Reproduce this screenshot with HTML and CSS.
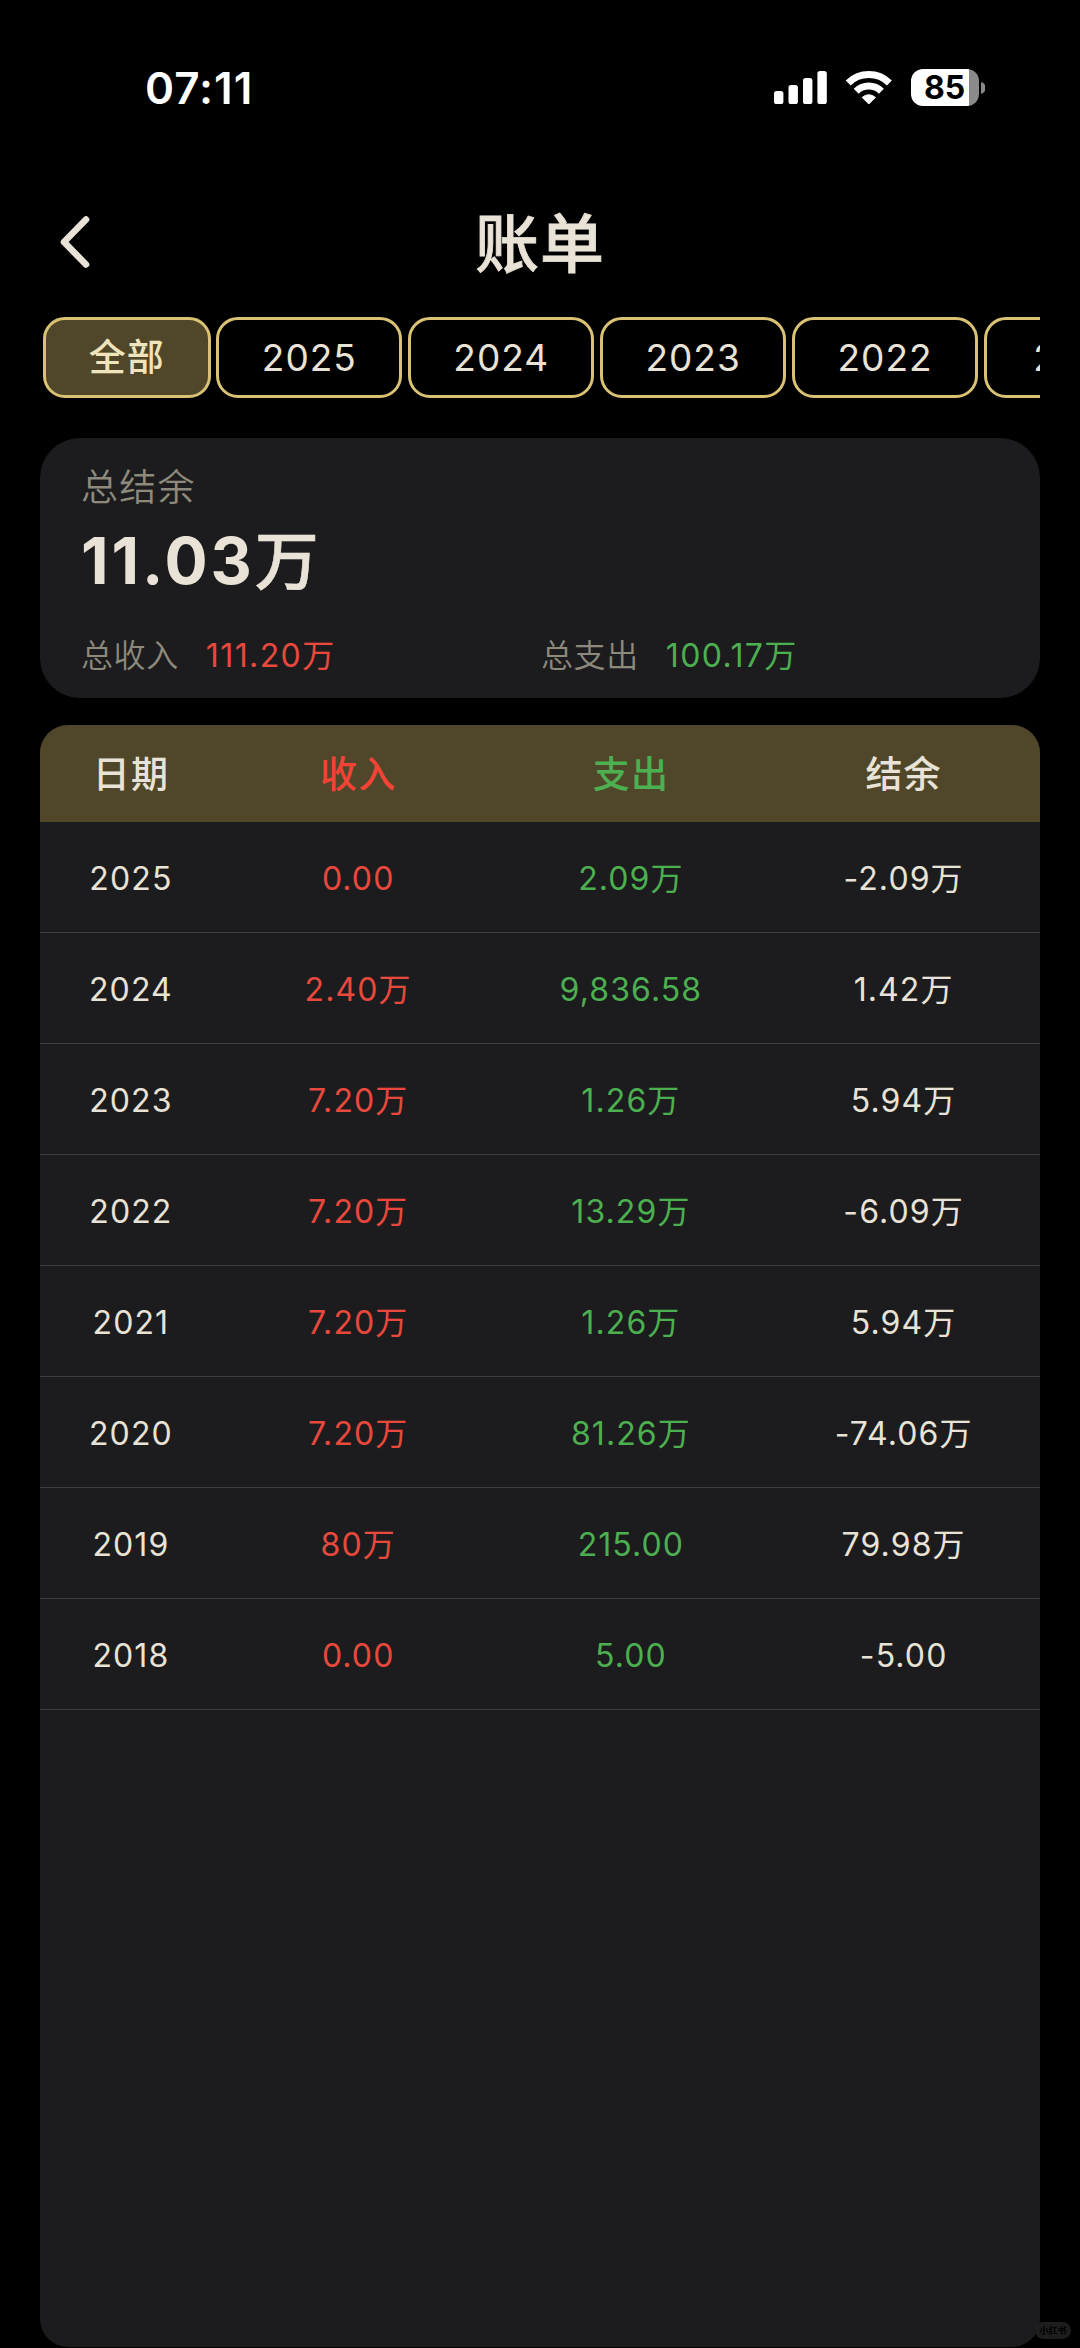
FILE: index.html
```html
<!DOCTYPE html>
<html lang="zh-CN">
<head>
<meta charset="utf-8">
<title>账单</title>
<link rel="stylesheet" href="styles.css">
</head>
<body>
<div class="screen">
  <header class="status">
    <span class="time">07:11</span>
    <div class="indicators">
      <svg class="signal" viewBox="0 0 53 33"><rect x="0" y="20" width="9.4" height="13" rx="2.6"/><rect x="14.5" y="14" width="9.4" height="19" rx="2.6"/><rect x="29" y="7" width="9.4" height="26" rx="2.6"/><rect x="43.4" y="0" width="9.4" height="33" rx="2.6"/></svg>
      <svg class="wifi" viewBox="0 0 46 34"><path class="arc" d="M2.200 12a29.400 29.400 0 0 1 41.200 0M10.200 20.200a18 18 0 0 1 25.200 0"/><path class="dot" d="M16.200 26.400a9.600 9.600 0 0 1 13.200 0L22.800 33z"/></svg>
      <div class="battery"><span class="level">85</span></div>
      <svg class="nub" viewBox="0 0 4 12"><path d="M0 0a6.200 6.200 0 0 1 0 12z"/></svg>
    </div>
  </header>
  <nav class="titlebar">
    <svg class="back" viewBox="0 0 30 52"><path d="M26 3.500 4 26l22 22.500"/></svg>
    <h1>账单</h1>
  </nav>
  <div class="chips">
    <span class="chip active">全部</span><span class="chip">2025</span><span class="chip">2024</span><span class="chip">2023</span><span class="chip">2022</span><span class="chip">2021</span>
  </div>
  <section class="summary">
    <div class="label">总结余</div>
    <div class="total">11.03<span class="unit">万</span></div>
    <div class="pair">
      <div class="item"><span class="name">总收入</span><span class="income">111.20万</span></div>
      <div class="item"><span class="name">总支出</span><span class="expense">100.17万</span></div>
    </div>
  </section>
  <section class="table">
    <div class="row head"><span>日期</span><span class="income">收入</span><span class="expense">支出</span><span>结余</span></div>
    <div class="row"><span>2025</span><span class="income">0.00</span><span class="expense">2.09万</span><span>-2.09万</span></div>
    <div class="row"><span>2024</span><span class="income">2.40万</span><span class="expense">9,836.58</span><span>1.42万</span></div>
    <div class="row"><span>2023</span><span class="income">7.20万</span><span class="expense">1.26万</span><span>5.94万</span></div>
    <div class="row"><span>2022</span><span class="income">7.20万</span><span class="expense">13.29万</span><span>-6.09万</span></div>
    <div class="row"><span>2021</span><span class="income">7.20万</span><span class="expense">1.26万</span><span>5.94万</span></div>
    <div class="row"><span>2020</span><span class="income">7.20万</span><span class="expense">81.26万</span><span>-74.06万</span></div>
    <div class="row"><span>2019</span><span class="income">80万</span><span class="expense">215.00</span><span>79.98万</span></div>
    <div class="row"><span>2018</span><span class="income">0.00</span><span class="expense">5.00</span><span>-5.00</span></div>
  </section>
  <div class="watermark">小红书</div>
</div>
</body>
</html>
```
FILE: styles.css
```css
* { box-sizing: border-box; }
body {
  margin: 0;
  background: #000;
  color: #e8e3d6;
  font-family: Inter, "Noto Sans CJK SC", sans-serif;
}
.screen {
  position: relative;
  display: flex;
  flex-direction: column;
  width: 1080px;
  height: 2348px;
  padding: 0 40px 1px;
  overflow: hidden;
}
.status {
  display: flex;
  justify-content: space-between;
  align-items: center;
  height: 175px;
  padding: 0 55px 0 105px;
  color: #fff;
}
.time { font-size: 44px; font-weight: 600; letter-spacing: 1px; }
.indicators { display: flex; align-items: center; }
.signal { width: 53px; height: 33px; fill: #fff; }
.wifi { width: 46px; height: 34px; margin-left: 19px; fill: #fff; }
.wifi .arc { fill: none; stroke: #fff; stroke-width: 7; }
.wifi .dot { stroke: #fff; stroke-width: 1; stroke-linejoin: round; }
.battery {
  width: 68px;
  height: 37px;
  margin-left: 19px;
  border-radius: 12px;
  background: linear-gradient(to right, #fff 58px, #8a8a8a 58px);
}
.level {
  display: block;
  padding-left: 13px;
  color: #000;
  font-size: 32px;
  font-weight: 700;
  line-height: 38px;
}
.nub { width: 4px; height: 12px; margin-left: 2px; fill: #8a8a8a; }
.titlebar {
  display: grid;
  grid-template-columns: 80px 1fr 80px;
  align-items: center;
  height: 133px;
}
.back {
  width: 30px;
  height: 52px;
  margin-left: 20px;
  fill: none;
  stroke: #e8e3d6;
  stroke-width: 6.6;
  stroke-linecap: round;
  stroke-linejoin: round;
}
h1 {
  margin: 0;
  padding-top: 4px;
  text-align: center;
  font-size: 64px;
  font-weight: 500;
  line-height: 92px;
  letter-spacing: 1px;
  -webkit-text-stroke: 0.8px currentColor;
}
.chips {
  display: flex;
  gap: 5.6px;
  height: 81px;
  margin-top: 9px;
  padding-left: 3px;
  overflow: hidden;
}
.chip {
  flex: none;
  width: 186.3px;
  border: 3px solid #d9c273;
  border-radius: 22px;
  font-size: 37px;
  font-weight: 380;
  line-height: 75px;
  letter-spacing: 1px;
  text-align: center;
}
.chip.active {
  width: 167.6px;
  background: #50472a;
  color: #f0e4bd;
  font-weight: 500;
}
.summary {
  height: 260px;
  margin-top: 40px;
  padding: 23px 43px 0 41px;
  border-radius: 40px;
  background: #1c1c1e;
}
.label { color: #8d8a7c; font-size: 37px; line-height: 54px; letter-spacing: 1.3px; font-weight: 350; }
.total { font-size: 64px; font-weight: 700; line-height: 92px; letter-spacing: 2.9px; }
.unit { font-weight: 500; -webkit-text-stroke: 0.6px currentColor; }
.pair { display: grid; grid-template-columns: 460px 1fr; margin-top: 25px; }
.item { font-size: 32px; font-weight: 380; line-height: 48px; letter-spacing: 1.4px; }
.name { margin-right: 27px; color: #8d8a7c; font-weight: 350; letter-spacing: 0.6px; }
.income { color: #e9483c; }
.expense { color: #4caf50; }
.table {
  flex: 1;
  margin-top: 27px;
  border-radius: 28px;
  background: #1c1c1e;
  overflow: hidden;
}
.row {
  display: grid;
  grid-template-columns: 2fr 3fr 3fr 3fr;
  align-items: center;
  height: 111px;
  padding-top: 3px;
  border-bottom: 1px solid #3c3c3d;
  font-size: 32px;
  font-weight: 380;
  line-height: 44px;
  letter-spacing: 1.1px;
  text-align: center;
}
.row.head {
  height: 97px;
  padding-top: 2px;
  border: 0;
  background: #50472a;
  font-size: 37px;
  font-weight: 500;
}
.head .income { color: #f44336; }
.watermark {
  position: absolute;
  right: 9px;
  bottom: 9px;
  width: 36px;
  height: 17px;
  border-radius: 9px;
  background: #1d1d1e;
  color: #000;
  font-size: 9px;
  font-weight: 700;
  line-height: 17px;
  text-align: center;
}
```
